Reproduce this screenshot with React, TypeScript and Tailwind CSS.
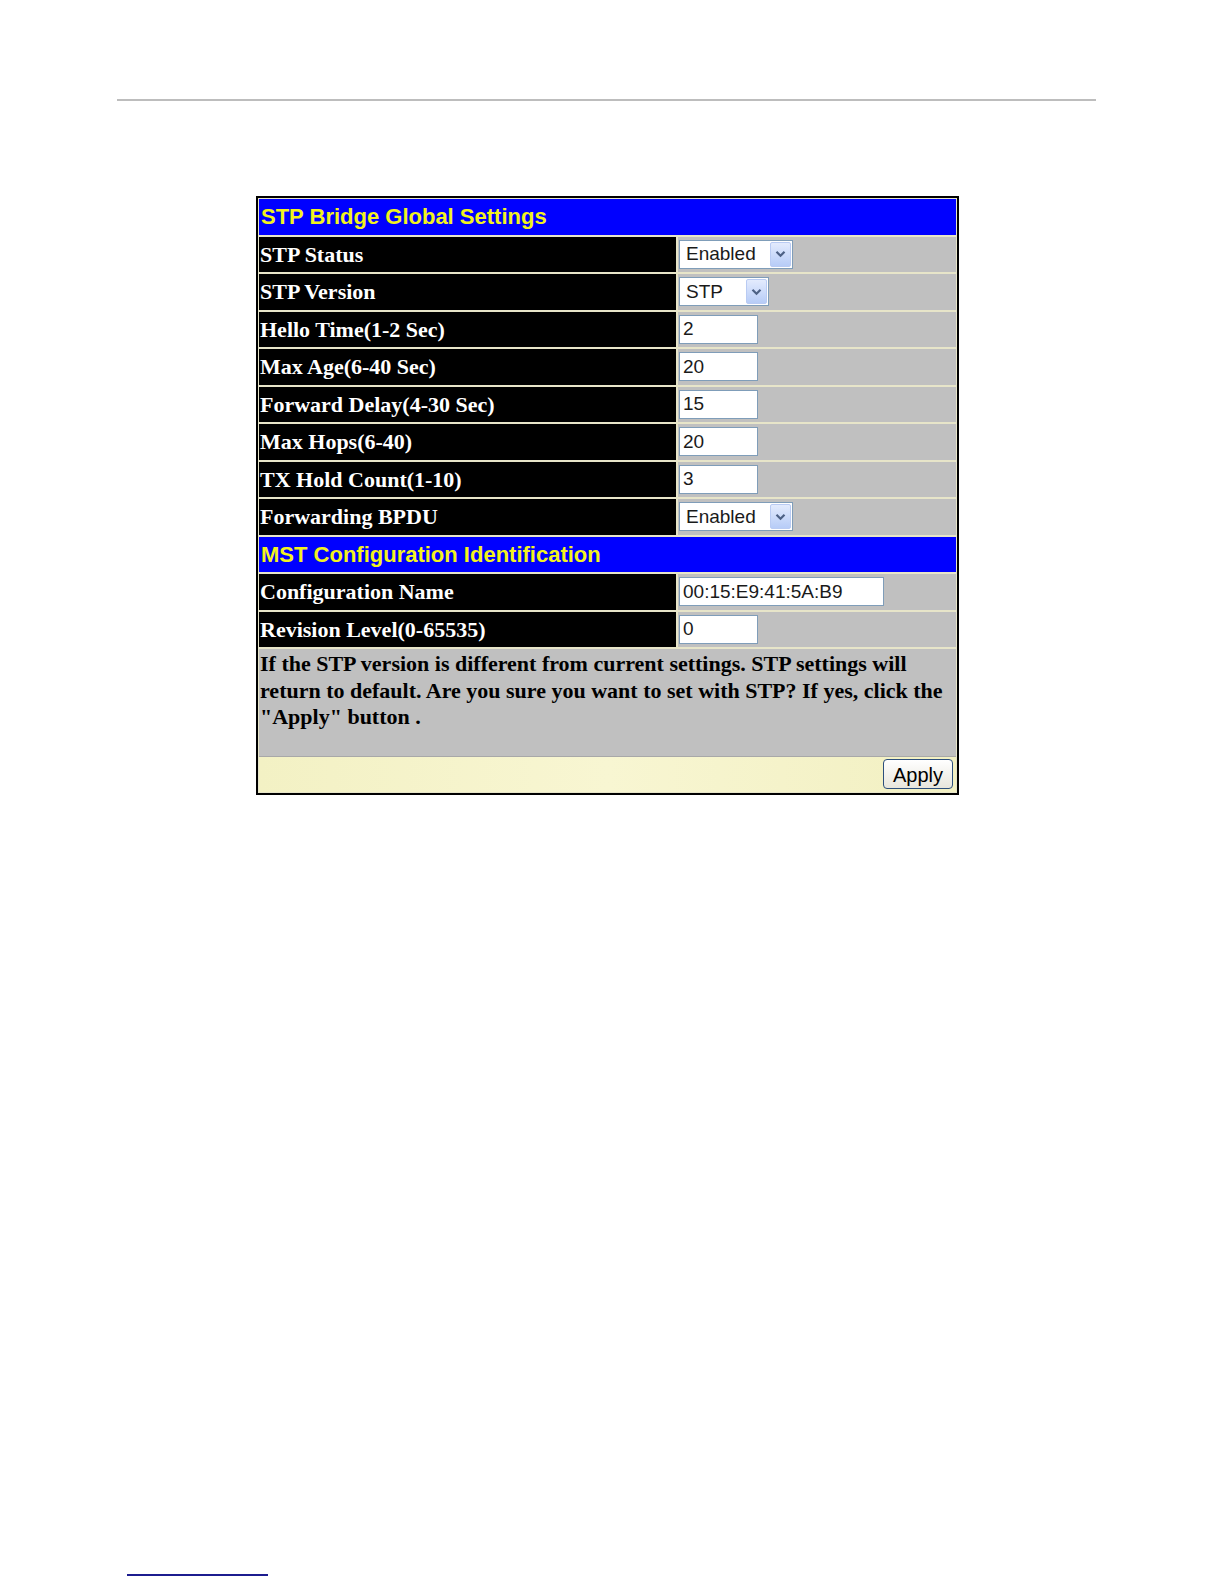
import React from 'react';

const serif = { fontFamily: '"Liberation Serif", "Times New Roman", serif' };
const sans = { fontFamily: '"Liberation Sans", Arial, sans-serif' };

type Row = {
    label: string;
    kind: 'select' | 'input';
    value: string;
    width: string;
};

const globalRows: Row[] = [
    { label: 'STP Status', kind: 'select', value: 'Enabled', width: 'w-[114px]' },
    { label: 'STP Version', kind: 'select', value: 'STP', width: 'w-[90px]' },
    { label: 'Hello Time(1-2 Sec)', kind: 'input', value: '2', width: 'w-[79px]' },
    { label: 'Max Age(6-40 Sec)', kind: 'input', value: '20', width: 'w-[79px]' },
    { label: 'Forward Delay(4-30 Sec)', kind: 'input', value: '15', width: 'w-[79px]' },
    { label: 'Max Hops(6-40)', kind: 'input', value: '20', width: 'w-[79px]' },
    { label: 'TX Hold Count(1-10)', kind: 'input', value: '3', width: 'w-[79px]' },
    { label: 'Forwarding BPDU', kind: 'select', value: 'Enabled', width: 'w-[114px]' },
];

const mstRows: Row[] = [
    { label: 'Configuration Name', kind: 'input', value: '00:15:E9:41:5A:B9', width: 'w-[205px]' },
    { label: 'Revision Level(0-65535)', kind: 'input', value: '0', width: 'w-[79px]' },
];

function SelectBox({ value, width }: { value: string; width: string }) {
    return (
        <div
            className={`${width} h-[29px] flex items-center justify-between bg-white border border-[#7f9db9] pl-[6px] pr-[1px] text-[19px] text-[#1a1a1a]`}
            style={sans}
        >
            <span>{value}</span>
            <div className="w-[21px] h-[25px] rounded-[2px] border border-[#b9cbf3] bg-gradient-to-b from-[#e3ebfd] to-[#b7ccf7] flex items-center justify-center">
                <svg width="11" height="8" viewBox="0 0 11 8">
                    <path d="M1.5 1.8 L5.5 5.8 L9.5 1.8" fill="none" stroke="#4d6185" strokeWidth="2.2" />
                </svg>
            </div>
        </div>
    );
}

function TextBox({ value, width }: { value: string; width: string }) {
    return (
        <div
            className={`${width} h-[29px] flex items-center bg-white border border-[#7f9db9] pl-[3px] text-[19px] text-[#1a1a1a]`}
            style={sans}
        >
            {value}
        </div>
    );
}

function Header({ title }: { title: string }) {
    return (
        <div
            className="col-span-2 h-[35.5px] bg-[#0000ff] flex items-center pl-[2px] text-[22px] font-bold text-[#f2f21e]"
            style={sans}
        >
            {title}
        </div>
    );
}

function FieldRow({ row }: { row: Row }) {
    return (
        <>
            <div className="h-[35.5px] bg-black text-white flex items-center pl-[1px] text-[22px] font-bold" style={serif}>
                {row.label}
            </div>
            <div className="h-[35.5px] bg-[#c0c0c0] flex items-center pl-[1px]">
                {row.kind === 'select' ? (
                    <SelectBox value={row.value} width={row.width} />
                ) : (
                    <TextBox value={row.value} width={row.width} />
                )}
            </div>
        </>
    );
}

export default function App() {
    return (
        <div className="h-[1584px] overflow-hidden bg-white flex flex-col">
            <div className="mt-[99px] ml-[117px] w-[979px] h-[2px] bg-[#bdbdbd]" />

            <div className="mt-[95px] ml-[256px] w-[703px] border-2 border-black bg-[#e7e5c9] p-px">
                <div className="grid grid-cols-[417px_278px] gap-[2px]">
                    <Header title="STP Bridge Global Settings" />
                    {globalRows.map((row) => (
                        <FieldRow key={row.label} row={row} />
                    ))}
                    <Header title="MST Configuration Identification" />
                    {mstRows.map((row) => (
                        <FieldRow key={row.label} row={row} />
                    ))}
                    <div
                        className="col-span-2 h-[108px] bg-[#c0c0c0] border-b border-[#a8a8a8] pl-[1px] pt-[2px] text-[22px] leading-[26.5px] font-bold text-black"
                        style={serif}
                    >
                        If the STP version is different from current settings. STP settings will return to default. Are you sure you want to set with STP? If yes, click the "Apply" button .
                    </div>
                </div>
                <div className="-mt-[2px] h-[37px] bg-gradient-to-r from-[#f3f1c4] via-[#f8f6d2] to-[#f2f0c2] flex items-center justify-end pr-[3px]">
                    <button
                        className="w-[70px] h-[30px] rounded-[4px] border border-[#2c4f7c] bg-gradient-to-b from-white to-[#e8e6dc] text-[20px] text-black"
                        style={sans}
                    >
                        Apply
                    </button>
                </div>
            </div>

            <div className="mt-auto mb-[8px] ml-[127px] w-[141px] h-[2px] bg-[#1c1c8f]" />
        </div>
    );
}
